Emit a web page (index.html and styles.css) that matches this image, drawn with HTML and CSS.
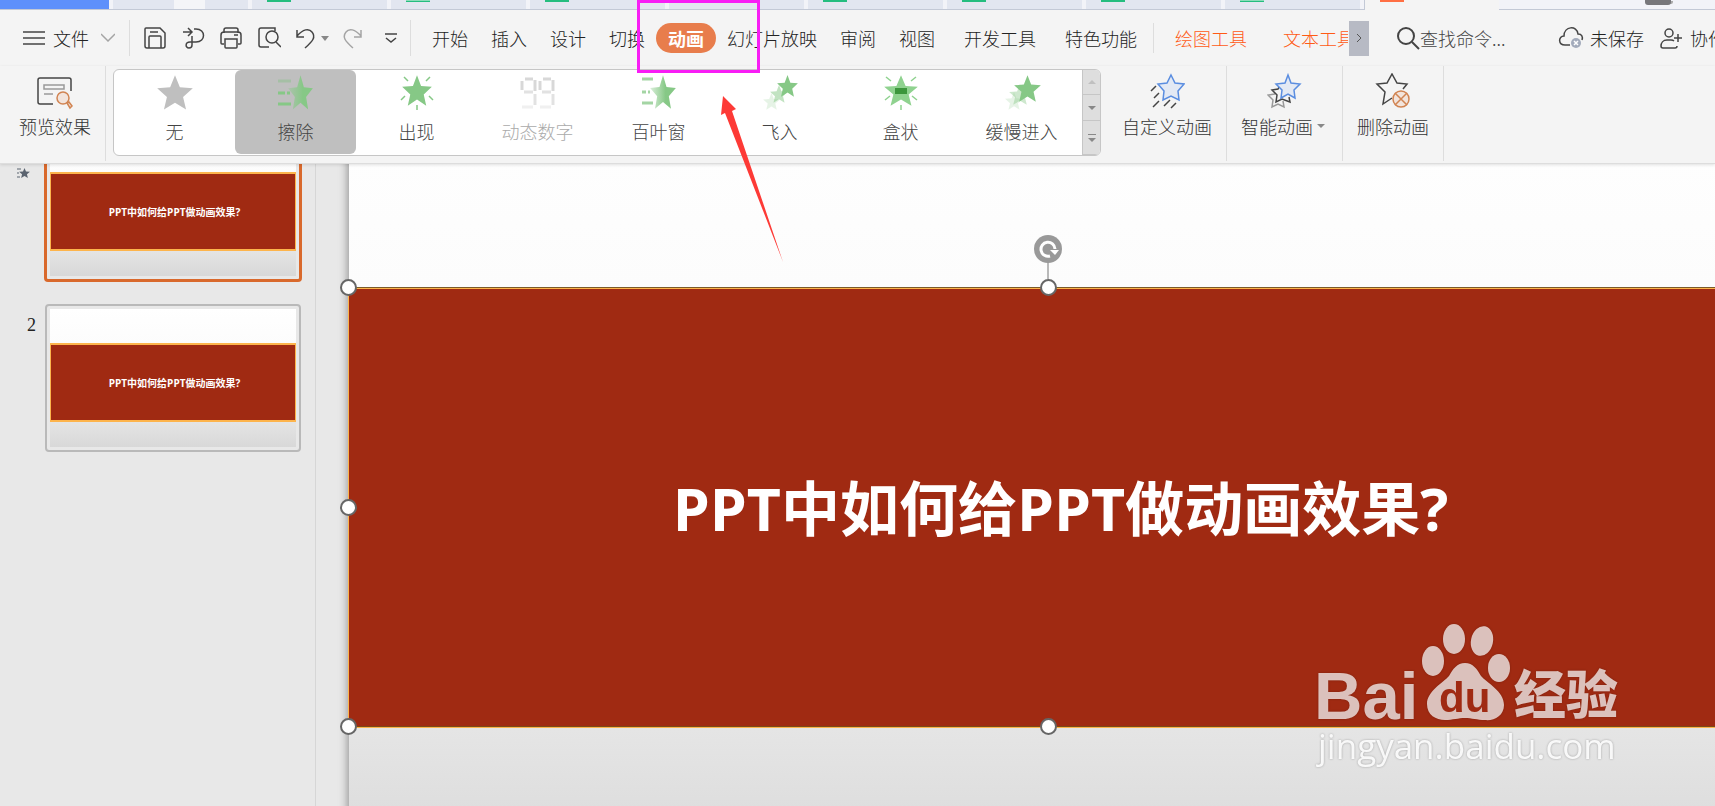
FILE: index.html
```html
<!DOCTYPE html>
<html lang="zh-CN">
<head>
    <meta charset="UTF-8">
    <meta name="viewport" content="width=device-width, initial-scale=1.0">
    <title>WPS 演示</title>
    <link rel="stylesheet" href="styles.css">
</head>
<body>
    <svg class="defs" aria-hidden="true">
        <symbol id="star" viewBox="-96 -101 192 184" preserveAspectRatio="none">
            <path d="M0-100 26-36 95-31 43 14 59 81 0 45-59 81-43 14-95-31-26-36Z"/>
        </symbol>
        <linearGradient id="fade">
            <stop offset="0" stop-color="#86c886" stop-opacity=".3"/>
            <stop offset=".6" stop-color="#86c886"/>
        </linearGradient>
    </svg>

    <div class="tabs">
        <div class="tab home"></div>
        <div class="tab docer"></div>
        <div class="tab"><i></i></div>
        <div class="tab"><i class="pale"></i></div>
        <div class="tab"><i></i></div>
        <div class="tab"><i></i></div>
        <div class="tab"><i></i></div>
        <div class="tab"><i></i></div>
        <div class="tab"><i></i></div>
        <div class="tab"><i class="pale"></i></div>
        <div class="tab active"><i></i></div>
        <div class="tab-rest"><span></span></div>
    </div>

    <header class="menu">
        <button class="file">
            <svg width="22" height="16" viewBox="0 0 22 16"><path d="M0 2h22M0 8h22M0 14h22"/></svg>
            文件
            <svg class="soft" width="14" height="10" viewBox="0 0 14 10"><path d="M0 1l7 7 7-7"/></svg>
        </button>
        <div class="quick">
            <button aria-label="保存"><svg width="24" height="24" viewBox="0 0 24 24"><path d="M3 2h14l5 5v13q0 2-2 2H4q-2 0-2-2V3q0-1 1-1zM6 22V11q0-1 1-1h10q1 0 1 1v11M7 6h8"/></svg></button>
            <button aria-label="输出"><svg width="24" height="24" viewBox="0 0 24 24"><path d="M2 6h8M7 2l4 4-4 4M13 3h2c10 0 10 13 0 13H9c-5 0-5 6-1 6 2 0 3-1 3-3V10"/></svg></button>
            <button aria-label="打印"><svg width="24" height="24" viewBox="0 0 24 24"><path d="M5 7V4q0-2 2-2h10q2 0 2 2v3M5 18H3q-1 0-1-1V9q0-3 3-3h14q3 0 3 3v8q0 1-1 1h-2M6 13h12v8q0 1-1 1H7q-1 0-1-1zM15 9h4"/></svg></button>
            <button aria-label="打印预览"><svg width="24" height="24" viewBox="0 0 24 24"><path d="M12 21H4q-2 0-2-2V4q0-2 2-2h14v3"/><circle cx="15" cy="11" r="6"/><path d="M19 16l5 5"/></svg></button>
            <button class="undo" aria-label="撤销"><svg width="22" height="24" viewBox="0 0 22 24"><path d="M2 4v7h7M2 10C8 3 14 2 17 6c4 5 1 9-7 16"/></svg><svg width="8" height="5" viewBox="0 0 8 5"><path class="solid" d="M0 0h8L4 5z"/></svg></button>
            <button class="soft" aria-label="恢复"><svg width="22" height="24" viewBox="0 0 22 24"><path d="M18 4v7h-7M18 10C12 3 6 2 3 6c-4 5-1 9 7 16"/></svg></button>
            <button aria-label="更多"><svg width="12" height="12" viewBox="0 0 12 12"><path d="M0 2h12M1 6l5 4 5-4"/></svg></button>
        </div>
        <nav>
            <a href="#">开始</a>
            <a href="#">插入</a>
            <a href="#">设计</a>
            <a href="#">切换</a>
            <a href="#" class="current">动画</a>
            <a href="#">幻灯片放映</a>
            <a href="#">审阅</a>
            <a href="#">视图</a>
            <a href="#" class="wide">开发工具</a>
            <a href="#" class="wide">特色功能</a>
        </nav>
        <div class="context">
            <a href="#">绘图工具</a>
            <a href="#">文本工具</a>
        </div>
        <button class="next" aria-label="下一个"><svg width="6" height="8" viewBox="0 0 6 8"><path d="M1 0l4 4-4 4"/></svg></button>
        <label class="search">
            <svg width="24" height="24" viewBox="0 0 24 24"><circle cx="10" cy="10" r="8"/><path d="M16 16l7 7"/></svg>
            <input type="text" placeholder="查找命令..." aria-label="查找命令">
        </label>
        <button class="status">
            <svg width="26" height="24" viewBox="0 0 26 24"><path d="M12 19H7C0 19 0 10 6 10 6 0 19-1 20 8c4 0 5 3 4 6"/><circle class="badge" cx="18" cy="17" r="5"/><path class="cross" d="M16 15l4 4M20 15l-4 4"/></svg>
            未保存
        </button>
        <button class="status share">
            <svg width="22" height="22" viewBox="0 0 22 22"><circle cx="9" cy="6" r="4"/><path d="M14 14c-1-1-2-1-3-1H7c-4 0-6 3-6 6 0 1 1 2 2 2h12q2 0 2-2M14 11h8M18 7v8"/></svg>
            协作
        </button>
    </header>

    <section class="ribbon">
        <div class="group preview">
            <button>
                <svg width="36" height="34" viewBox="0 0 36 34"><path d="M16 28H3q-2 0-2-2V4q0-2 2-2h29q2 0 2 2v11"/><path class="grey" d="M7 9h20v4H7zM7 18h9"/><circle class="tan" cx="26" cy="22" r="6"/><path class="tan" d="M30 27l2-1 3 4-2 2z"/></svg>
                预览效果
            </button>
        </div>
        <div class="gallery">
            <button>
                <svg viewBox="0 0 40 38"><use href="#star" x="2" y="1" width="36" height="35" fill="#bfbfbf"/></svg>
                无
            </button>
            <button class="selected">
                <svg viewBox="0 0 40 38"><path d="M2 7h13" stroke="#a5bfa5" stroke-width="3"/><path d="M2 19h7M11 19h3M2 30h13" stroke="#86c886" stroke-width="3"/><use href="#star" x="12" y="1" width="25" height="35" fill="url(#fade)"/></svg>
                擦除
            </button>
            <button>
                <svg viewBox="0 0 40 38"><use href="#star" x="5" y="1" width="30" height="31" fill="#86c886"/><path d="M7 3l4 4M33 3l-4 4M20 31v5M4 26l4-4M36 26l-4-4" stroke="#86c886" stroke-width="1.5"/></svg>
                出现
            </button>
            <button disabled>
                <svg viewBox="0 0 40 38" fill="none" stroke-width="3"><path stroke="#d8d8d8" d="M7 5h8M4 7v9M17 6v11M25 5h8M22 7v9M35 6v11"/><path stroke="#e2e2e2" d="M6 18h9M17 20v11M24 18h9M35 20v11"/><path stroke="#f0f0f0" d="M4 33h11M22 33h11"/></svg>
                动态数字
            </button>
            <button>
                <svg viewBox="0 0 40 38"><path d="M3 5h11M3 18h4M9 18h2M3 29h11" stroke="#86c886" stroke-width="3" opacity=".75"/><use href="#star" x="11" y="1" width="26" height="34" fill="url(#fade)"/></svg>
                百叶窗
            </button>
            <button>
                <svg viewBox="0 0 40 38" fill="#86c886"><use href="#star" x="3" y="19" width="17" height="17" opacity=".2"/><use href="#star" x="10" y="11" width="18" height="18" opacity=".5"/><use href="#star" x="17" y="1" width="21" height="22"/></svg>
                飞入
            </button>
            <button>
                <svg viewBox="0 0 40 38"><use href="#star" x="3" y="1" width="34" height="31" fill="#8fd28f"/><path d="M5 3l5 4M35 3l-5 4M20 31v5M4 26l5-4M36 26l-5-4" stroke="#8fd28f" stroke-width="1.5"/><path fill="#3c963c" d="M14 14h12v6H14z"/></svg>
                盒状
            </button>
            <button>
                <svg viewBox="0 0 40 38" fill="#86c886"><use href="#star" x="3" y="18" width="18" height="18" opacity=".2"/><use href="#star" x="7" y="10" width="22" height="21" opacity=".4"/><use href="#star" x="12" y="1" width="27" height="27"/></svg>
                缓慢进入
            </button>
            <div class="scroller">
                <button disabled aria-label="向上"><svg width="8" height="4" viewBox="0 0 8 4"><path d="M0 4h8L4 0z"/></svg></button>
                <button aria-label="向下"><svg width="8" height="4" viewBox="0 0 8 4"><path d="M0 0h8L4 4z"/></svg></button>
                <button aria-label="展开"><svg width="8" height="8" viewBox="0 0 8 8"><path d="M0 0h8v1H0zM0 4h8L4 8z"/></svg></button>
            </div>
        </div>
        <div class="group">
            <button>
                <svg width="36" height="36" viewBox="0 0 36 36"><path class="blue" d="M22 2l4 8 9 1-6 7 1 9-8-4-8 4 1-9-6-7 9-1z"/><path d="M7 13l-5 5M10 20l-5 5M10 28l-6 6M21 27l-6 6M27 30l-5 5"/></svg>
                自定义动画
            </button>
        </div>
        <div class="group">
            <button>
                <svg width="36" height="36" viewBox="0 0 36 36"><path class="grey" d="M8 21l-7 1 5 5-1 7 6-3 6 3-1-6"/><path d="M12 14l-1 2-6 1 5 5-1 7 6-3 8 3-1-5"/><path class="blue" d="M21 2l3 8 9 1-6 6 1 8-7-4-7 4 1-8-6-6 9-1z"/></svg>
                <span>智能动画<svg class="caret" width="8" height="4" viewBox="0 0 8 4"><path class="solid" d="M0 0h8L4 4z"/></svg></span>
            </button>
        </div>
        <div class="group">
            <button>
                <svg width="36" height="36" viewBox="0 0 36 36"><path d="M17 25l-9 6 2-12-8-8 10-1 5-9 5 9 10 1-4 5"/><circle class="tan" cx="26" cy="26" r="8"/><path class="tan" d="M20 20l12 12M32 20L20 32"/></svg>
                删除动画
            </button>
        </div>
    </section>

    <main>
        <aside>
            <ol class="slides">
                <li>
                    <svg class="mark" width="13" height="11" viewBox="0 0 13 11"><use href="#star" x="2" y="0" width="11" height="10"/><path d="M0 1h4M0 5h2M0 9h3" stroke="#5b6470"/></svg>
                    <div class="thumb chosen"><div class="page"><p>PPT中如何给PPT做动画效果?</p></div></div>
                </li>
                <li>
                    <span>2</span>
                    <div class="thumb"><div class="page"><p>PPT中如何给PPT做动画效果?</p></div></div>
                </li>
            </ol>
        </aside>
        <div class="stage">
            <div class="slide">
                <div class="banner">
                    <h1>PPT中如何给PPT做动画效果?</h1>
                    <svg class="rotate" width="30" height="45" viewBox="0 0 30 45"><path class="stem" d="M15 28v17"/><circle cx="15" cy="15" r="14"/><path class="turn" d="M17 22a7 7 0 1 1 5-7"/><path class="head" d="M17 16h9l-4 5z"/></svg>
                    <i class="handle top left"></i>
                    <i class="handle top"></i>
                    <i class="handle left"></i>
                    <i class="handle bottom left"></i>
                    <i class="handle bottom"></i>
                </div>
            </div>
            <svg class="watermark" width="320" height="160" viewBox="0 0 320 160">
                <text class="brand" x="4" y="104">Bai</text>
                <ellipse cx="123" cy="46" rx="11" ry="15"/>
                <ellipse cx="144" cy="24" rx="11" ry="15"/>
                <ellipse cx="172" cy="26" rx="11" ry="15" transform="rotate(12 172 26)"/>
                <ellipse cx="189" cy="53" rx="11" ry="14"/>
                <path d="M155 48C163 48 167 54 171 61 177 68 194 76 194 90 194 101 184 106 175 105 167 105 162 103 155 103 148 103 143 105 135 105 126 105 117 100 117 89 117 76 133 68 139 61 143 54 147 48 155 48Z"/>
                <text class="du" x="129" y="97">du</text>
                <text class="jingyan" x="204" y="99">经验</text>
                <text class="url" x="8" y="144">jingyan.baidu.com</text>
            </svg>
        </div>
    </main>

    <div class="highlight"></div>
    <svg class="arrow" width="64" height="168" viewBox="0 0 64 168"><path d="M3 1l13 13-4 2 51 151L5 18l-4 2z"/></svg>
</body>
</html>
```
FILE: styles.css
```css
* {
    box-sizing: border-box;
}

body {
    margin: 0;
    height: 100vh;
    overflow: hidden;
    display: flex;
    flex-direction: column;
    position: relative;
    background: #f4f4f4;
    color: #222;
    font-family: "Noto Sans CJK SC", sans-serif;
    font-size: 18px;
    font-weight: 300;
    line-height: 24px;
}

button {
    border: 0;
    padding: 0;
    background: none;
    color: inherit;
    font: inherit;
    white-space: nowrap;
}

a {
    color: inherit;
    text-decoration: none;
    white-space: nowrap;
}

.defs {
    position: absolute;
    width: 0;
    height: 0;
}

/* Document tabs */
.tabs {
    display: flex;
    flex: none;
    height: 10px;
    background: #f2f3f8;
    border-bottom: 1px solid #c3c9d6;
}

.tab {
    flex: none;
    width: 135px;
    margin-right: 4px;
    padding-left: 15px;
    background: #e2e6f0;
}

.tab i {
    display: block;
    width: 24px;
    height: 2px;
    background: #25bd7f;
}

.tab i.pale {
    background: #8adcb8;
    border-bottom: 1px solid #25bd7f;
}

.tab.home {
    width: 109px;
    background: #5e90fb;
}

.tab.docer {
    background: linear-gradient(90deg, #e2e6f0 61px, #f4f5f8 61px, #f4f5f8 92px, #e2e6f0 92px);
}

.tab.active {
    height: 10px;
    margin-right: 0;
    background: #f4f4f4;
    border-left: 1px solid #c3c9d6;
}

.tab.active i {
    background: #ff6f43;
}

.tab-rest {
    flex: 1;
    padding-left: 146px;
}

.tab-rest span {
    display: block;
    width: 26px;
    height: 5px;
    border-radius: 0 0 3px 3px;
    background: #77777b;
    box-shadow: 3px 0 0 -1px #aaa;
}

/* Menu row */
.menu {
    display: flex;
    flex: none;
    align-items: center;
    height: 56px;
}

.menu > * {
    flex: none;
}

.menu svg,
.group svg {
    fill: none;
    stroke: #444;
    stroke-width: 1.5;
}

.menu .soft {
    opacity: 0.45;
}

svg .solid {
    fill: #888;
    stroke: none;
}

.file {
    display: flex;
    align-items: center;
    gap: 8px;
    width: 130px;
    height: 36px;
    padding: 0 14px 0 23px;
    border-right: 1px solid #ddd;
}

.file .soft {
    margin-left: 4px;
}

.quick {
    display: flex;
    align-items: center;
    gap: 14px;
    width: 281px;
    height: 36px;
    padding-left: 13px;
    border-right: 1px solid #ddd;
}

.quick button {
    display: flex;
    align-items: center;
}

.undo {
    gap: 4px;
}

.quick button:last-child {
    margin-left: 6px;
}

nav {
    display: flex;
    align-items: center;
    gap: 23px;
    padding: 0 16px 0 21px;
    border-right: 1px solid #ddd;
}

nav .current {
    margin: 0 -12px;
    padding: 3px 12px;
    border-radius: 15px;
    background: #e87d4c;
    color: #fff;
    font-weight: 700;
}

nav .wide {
    margin-left: 6px;
}

.context {
    display: flex;
    gap: 36px;
    width: 194px;
    padding-left: 21px;
    overflow: hidden;
    color: #ff5a15;
}

.next {
    width: 20px;
    height: 35px;
    margin-left: 1px;
    background: #b7bac4;
}

.menu .next svg {
    display: block;
    margin: auto;
    stroke: #555;
    stroke-width: 1;
}

.search {
    display: flex;
    align-items: center;
    width: 189px;
    padding-left: 27px;
}

.menu .search svg {
    stroke-width: 2;
}

.search input {
    width: 110px;
    padding: 0;
    border: 0;
    background: none;
    font: inherit;
}

.search input::placeholder {
    color: #444;
}

.status {
    display: flex;
    align-items: center;
    gap: 6px;
}

.status .badge {
    fill: #a3abbb;
    stroke: none;
}

.status .cross {
    stroke: #fff;
}

.share {
    gap: 8px;
    margin-left: 16px;
}

/* Ribbon */
.ribbon {
    display: flex;
    flex: none;
    height: 98px;
    border-bottom: 1px solid #ddd;
    position: relative;
    z-index: 1;
    box-shadow: 0 1px 3px rgba(0, 0, 0, 0.12);
    background: #f4f4f4;
}

.group {
    flex: none;
    height: 95px;
    padding: 7px 14px 0;
    border-right: 1px solid #ddd;
    color: #333;
}

.group button {
    display: flex;
    flex-direction: column;
    align-items: center;
    gap: 5px;
}

.preview {
    width: 106px;
    padding: 10px 14px 0 19px;
}

.preview button {
    gap: 4px;
}

.group .grey {
    stroke: #999;
}

.group .tan {
    fill: #f2e4dc;
    stroke: #d18452;
}

.group .blue {
    fill: #e3e9f4;
    stroke: #5a8de0;
}

.caret {
    margin: 0 3px 6px 4px;
}

.gallery {
    display: flex;
    flex: none;
    height: 87px;
    margin: 3px 7px 0;
    border: 1px solid #c6c6c6;
    border-radius: 6px;
    background: #fff;
    overflow: hidden;
    color: #444;
}

.gallery > button {
    display: flex;
    flex-direction: column;
    align-items: center;
    gap: 7px;
    width: 121px;
    height: 84px;
    padding-top: 4px;
    border-radius: 6px;
}

.gallery > button svg {
    width: 40px;
    height: 38px;
}

.gallery .selected {
    background: #bfbfbf;
}

.gallery > button:disabled {
    color: #aaa;
}

.scroller {
    display: grid;
    grid-template-rows: 25px 26px 34px;
    width: 18px;
    border-left: 1px solid #c6c6c6;
    background: #dedede;
}

.scroller button {
    display: flex;
    align-items: center;
    justify-content: center;
    border-bottom: 1px solid #c6c6c6;
}

.scroller svg {
    fill: #888;
}

.scroller :disabled svg {
    fill: #c0c0c0;
}

/* Workspace */
main {
    display: flex;
    flex: 1;
    min-height: 0;
    background: #e8e8e8;
}

aside {
    flex: none;
    width: 316px;
    border-right: 1px solid #d6d6d6;
    overflow: hidden;
}

.slides {
    display: grid;
    gap: 21px;
    margin: -32px 0 0;
    padding: 0;
    list-style: none;
}

.slides li {
    display: grid;
    grid-template-columns: 44px 258px;
}

.slides span {
    padding: 10px 8px 0 0;
    text-align: right;
    font-family: "Liberation Serif", serif;
    font-weight: 400;
}

.mark {
    margin: 36px 0 0 17px;
    fill: #5b6470;
}

.thumb {
    margin: 1px;
    padding: 3px;
    border: 2px solid #b9b9b9;
    border-radius: 4px;
}

.thumb.chosen {
    margin: 0;
    border: 3px solid #d9692c;
}

.page,
.slide {
    background: linear-gradient(#fff, #fcfcfc 25%, #e5e5e5 81%, #d8d8d8);
}

.page {
    height: 138px;
    padding-top: 34px;
}

.page p {
    margin: 0;
    height: 79px;
    padding-left: 3px;
    border: solid #fdb44c;
    border-width: 2px 1px;
    background: #a02a12;
    color: #fff;
    font-family: "Open Sans", "Noto Sans CJK SC", sans-serif;
    font-size: 10px;
    font-weight: 700;
    line-height: 76px;
    text-align: center;
    white-space: nowrap;
}

.stage {
    flex: 1;
    min-width: 0;
    position: relative;
    overflow: hidden;
    padding-left: 33px;
}

.slide {
    width: 1400px;
    height: 788px;
    margin-top: -73px;
    padding-top: 196px;
    box-shadow: 0 0 9px 1px rgba(0, 0, 0, 0.4);
}

.banner {
    position: relative;
    display: flex;
    align-items: center;
    justify-content: center;
    height: 441px;
    margin-left: -1px;
    padding-left: 24px;
    border: 1px solid #7a5a28;
    border-left-color: #fdb44c;
    border-bottom-color: #fdb44c;
    box-shadow: inset 0 1px #fdb44c, inset 0 -1px #7a4a18;
    background: #a02a12;
}

h1 {
    margin: 0;
    color: #fff;
    font-family: "Open Sans", "Noto Sans CJK SC", sans-serif;
    font-size: 59px;
    line-height: 80px;
    white-space: nowrap;
}

.handle {
    position: absolute;
    top: 50%;
    left: 50%;
    width: 17px;
    height: 17px;
    margin: -9px;
    border: 2px solid #666;
    border-radius: 50%;
    background: #fff;
}

.handle.top {
    top: 0;
}

.handle.left {
    left: 0;
}

.handle.bottom {
    top: 100%;
}

.rotate {
    position: absolute;
    bottom: 100%;
    left: 50%;
    margin: 0 0 9px -16px;
    fill: #999;
}

.rotate .stem {
    stroke: #777;
}

.rotate .turn {
    fill: none;
    stroke: #fff;
    stroke-width: 3;
}

.rotate .head {
    fill: #fff;
}

.watermark {
    position: absolute;
    right: 85px;
    bottom: 31px;
    fill: rgba(255, 255, 255, 0.72);
    filter: drop-shadow(0 0 1px rgba(0, 0, 0, 0.3));
}

.brand {
    font: 700 67px "Liberation Sans", sans-serif;
}

.du {
    fill: #a02a12;
    font: 700 42px "Liberation Sans", sans-serif;
}

.jingyan {
    font: 900 52px "Noto Sans CJK SC", sans-serif;
}

.url {
    fill: rgba(255, 255, 255, 0.9);
    font: 500 35px "Open Sans", sans-serif;
}

/* Annotations */
.highlight {
    position: absolute;
    top: 0;
    left: 637px;
    z-index: 2;
    width: 123px;
    height: 73px;
    border: 3px solid #f81df5;
}

.arrow {
    position: absolute;
    top: 95px;
    left: 720px;
    z-index: 2;
    fill: #fd3a36;
}
```
